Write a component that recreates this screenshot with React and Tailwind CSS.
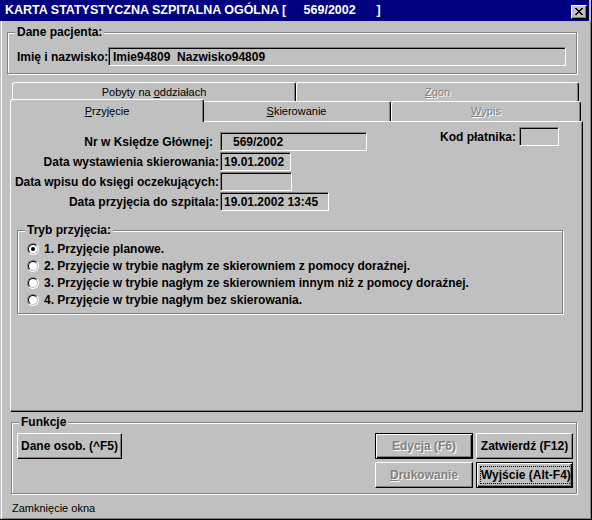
import React from 'react';

const raised = 'border border-t-white border-l-white border-r-black border-b-black shadow-[inset_-1px_-1px_0_#808080]';
const defaultBtn = 'border border-black shadow-[inset_1px_1px_0_#fff,inset_-1px_-1px_0_#000,inset_-2px_-2px_0_#808080]';
const sunken = 'border border-t-[#808080] border-l-[#808080] border-r-white border-b-white shadow-[inset_1px_1px_0_#000]';
const etched = 'border border-[#808080] shadow-[inset_1px_1px_0_#fff,1px_1px_0_#fff]';
const grayText = 'text-[#808080] [text-shadow:1px_1px_0_#fff]';

const closeGlyph = ['11000011', '01100110', '00111100', '00011000', '00111100', '01100110', '11000011'];

function CloseIcon() {
  return (
    <svg width="8" height="7" shapeRendering="crispEdges">
      {closeGlyph.flatMap((row, y) =>
        [...row].map((c, x) =>
          c === '1' ? <rect key={`${x}-${y}`} x={x} y={y} width="1" height="1" fill="#000" /> : null
        )
      )}
    </svg>
  );
}

function Group({ title, className, children }) {
  return (
    <div className={`${etched} ${className}`}>
      <div className="-mt-[8px] ml-[7px] w-fit bg-[#c0c0c0] px-[2px] text-[12px] font-bold leading-[14px]">{title}</div>
      {children}
    </div>
  );
}

function Field({ className = '', children }) {
  return (
    <div className={`${sunken} flex h-[19px] items-center whitespace-pre pl-[3px] text-[12px] font-bold leading-[14px] ${className}`}>
      {children}
    </div>
  );
}

function Radio({ checked, label }) {
  return (
    <div className="flex h-[17px] items-center gap-[5px]">
      <div className="h-[12px] w-[12px] rounded-full border border-t-[#808080] border-l-[#808080] border-r-white border-b-white">
        <div className="flex h-full w-full items-center justify-center rounded-full border border-t-black border-l-black border-r-[#c0c0c0] border-b-[#c0c0c0] bg-white">
          {checked && <div className="h-[4px] w-[4px] rounded-full bg-black" />}
        </div>
      </div>
      <span className="whitespace-nowrap text-[12px] font-bold leading-[14px]">{label}</span>
    </div>
  );
}

const tabBase = 'flex items-center justify-center rounded-t-[3px] border-t border-l border-r border-t-white border-l-white border-r-black shadow-[inset_-1px_0_0_#808080] text-[11px] leading-[13px]';

const rows = [
  { label: 'Nr w Księdze Głównej:', value: '569/2002', w: 'w-[147px]', pad: 'pr-[6px]', valuePad: 'pl-[12px]' },
  { label: 'Data wystawienia skierowania:', value: '19.01.2002', w: 'w-[71px]' },
  { label: 'Data wpisu do księgi oczekujących:', value: '', w: 'w-[72px]' },
  { label: 'Data przyjęcia do szpitala:', value: '19.01.2002 13:45', w: 'w-[109px]' },
];

const modes = [
  '1. Przyjęcie planowe.',
  '2. Przyjęcie w trybie nagłym ze skierowniem z pomocy doraźnej.',
  '3. Przyjęcie w trybie nagłym ze skierowniem innym niż z pomocy doraźnej.',
  '4. Przyjęcie w trybie nagłym bez skierowania.',
];

export default function App() {
  return (
    <div className="flex h-[520px] w-[592px] flex-col overflow-hidden border-r border-b border-black bg-[#c0c0c0] font-['Liberation_Sans',Arial,sans-serif] text-black">
      {/* title bar */}
      <div className="mr-[2px] flex h-[21px] items-start bg-[#000080]">
        <span className="mt-[3px] whitespace-pre pl-[5px] text-[12.5px] font-bold leading-[14px] text-white">
          KARTA STATYSTYCZNA SZPITALNA OGÓLNA [     569/2002      ]
        </span>
        <div className={`${raised} ml-auto mr-[2px] mt-[5px] flex h-[14px] w-[16px] items-center justify-center bg-[#c0c0c0] pb-[1px]`}>
          <CloseIcon />
        </div>
      </div>

      <div className="ml-[1px] flex flex-1 flex-col border-l border-r border-b border-l-white border-r-[#808080] border-b-[#808080]">
        {/* patient */}
        <Group title="Dane pacjenta:" className="ml-[5px] mt-[11px] h-[42px] w-[570px]">
          <div className="mt-[8px] flex items-center">
            <span className="w-[100px] whitespace-nowrap pl-[9px] text-[12px] font-bold leading-[14px]">Imię i nazwisko:</span>
            <Field className="w-[458px] pl-[4px]">Imie94809  Nazwisko94809</Field>
          </div>
        </Group>

        {/* tabs */}
        <div className="ml-[10px] mt-[8px] flex h-[19px]">
          <div className={`${tabBase} h-[19px] w-[284px]`}>
            <span>Pobyty na <u>o</u>ddziałach</span>
          </div>
          <div className={`${tabBase} h-[19px] w-[283px]`}>
            <span className={grayText}><u>Z</u>gon</span>
          </div>
        </div>
        <div className="ml-[10px] flex h-[20px] items-end">
          <div className={`${tabBase} relative z-10 -mx-[2px] -mb-[1px] h-[23px] w-[194px] bg-[#c0c0c0]`}>
            <span><u>P</u>rzyjęcie</span>
          </div>
          <div className={`${tabBase} h-[20px] w-[189px]`}>
            <span><u>S</u>kierowanie</span>
          </div>
          <div className={`${tabBase} h-[20px] w-[190px]`}>
            <span className={grayText}><u>W</u>ypis</span>
          </div>
        </div>

        {/* tab page */}
        <div className="ml-[8px] h-[291px] w-[573px] border border-t-white border-l-white border-r-black border-b-black shadow-[inset_-1px_-1px_0_#808080]">
          <div className="flex items-start">
            <div className="mt-[10px] grid grid-cols-[208px_auto] gap-x-[1px] gap-y-[1px]">
              {rows.map((r) => (
                <React.Fragment key={r.label}>
                  <span className={`flex h-[19px] items-center justify-end whitespace-nowrap text-[12px] font-bold leading-[14px] ${r.pad || ''}`}>
                    {r.label}
                  </span>
                  <Field className={`${r.w} ${r.valuePad || ''}`}>{r.value}</Field>
                </React.Fragment>
              ))}
            </div>
            <div className="ml-auto mr-[23px] mt-[5px] flex items-center gap-[3px]">
              <span className="whitespace-nowrap text-[12px] font-bold leading-[14px]">Kod płatnika:</span>
              <Field className="w-[40px]" />
            </div>
          </div>

          <Group title="Tryb przyjęcia:" className="ml-[6px] mt-[19px] h-[84px] w-[546px]">
            <div className="mt-[3px] flex flex-col pl-[9px]">
              {modes.map((m, i) => (
                <Radio key={m} checked={i === 0} label={m} />
              ))}
            </div>
          </Group>
        </div>

        {/* functions */}
        <Group title="Funkcje" className="ml-[9px] mt-[10px] h-[72px] w-[566px]">
          <div className="mt-[4px] flex items-start">
            <div className={`${raised} ml-[5px] flex h-[26px] w-[105px] items-center justify-center whitespace-nowrap text-[12px] font-bold leading-[14px]`}>
              Dane osob. (^F5)
            </div>
            <div className="ml-auto mr-[3px] grid grid-cols-[98px_97px] grid-rows-[26px_26px] gap-[3px]">
              <div className={`${defaultBtn} flex items-center justify-center whitespace-nowrap text-[12px] font-bold leading-[14px]`}>
                <span className={grayText}>Edycja (F6)</span>
              </div>
              <div className={`${raised} flex items-center justify-center whitespace-nowrap text-[12px] font-bold leading-[14px]`}>
                Zatwierdź (F12)
              </div>
              <div className={`${raised} flex items-center justify-center whitespace-nowrap text-[12px] font-bold leading-[14px]`}>
                <span className={grayText}><u>D</u>rukowanie</span>
              </div>
              <div className={`${defaultBtn} flex p-[3px]`}>
                <div className="flex flex-1 items-center justify-center whitespace-nowrap border border-dotted border-black text-[12px] font-bold leading-[14px]">
                  Wyjście (Alt-F4)
                </div>
              </div>
            </div>
          </div>
        </Group>

        <div className="ml-[10px] mt-[8px] text-[11px] leading-[13px]">Zamknięcie okna</div>
      </div>
    </div>
  );
}
